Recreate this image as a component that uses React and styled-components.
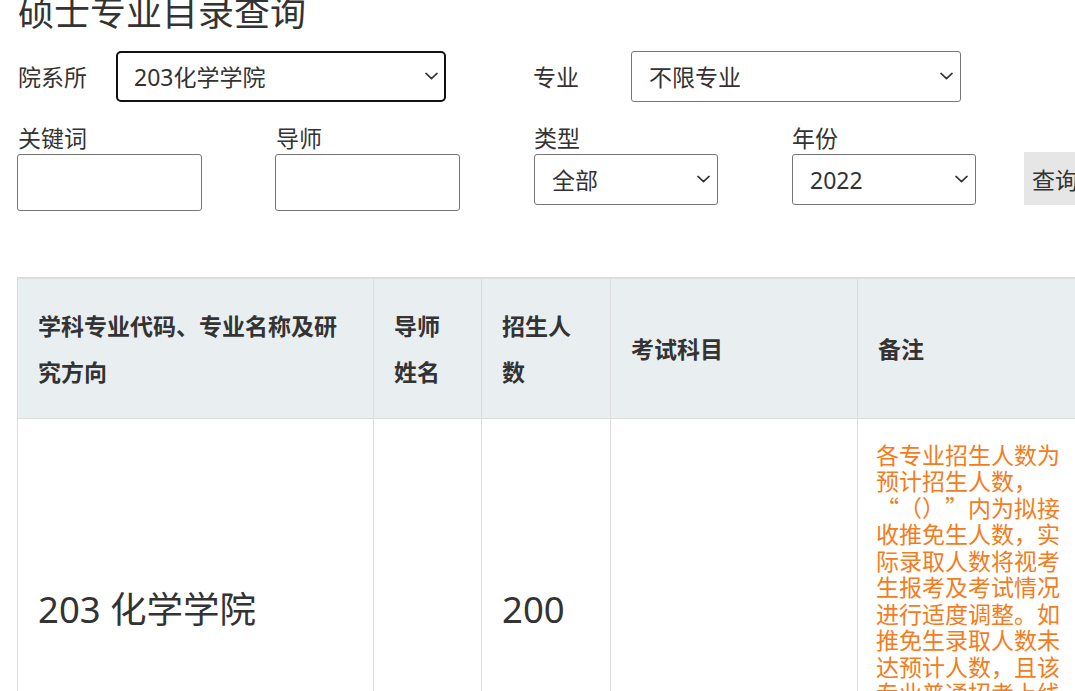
import React from 'react';
import styled, { createGlobalStyle } from 'styled-components';

const GlobalStyle = createGlobalStyle`
  html, body {
    margin: 0;
    padding: 0;
    overflow: hidden;
    background: #fff;
  }
  body {
    font-family: "Noto Sans", "Noto Sans CJK SC", sans-serif;
    color: #333;
  }
`;

// zero-width space lets the line break between "，" and the opening quote
const remark =
  '各专业招生人数为预计招生人数，\u200B“（）”内为拟接收推免生人数，实际录取人数将视考生报考及考试情况进行适度调整。如推免生录取人数未达预计人数，且该专业普通招考上线生源充足，剩余名额将用于普通招考。';

const Chevron = () => (
  <svg width="13" height="8" viewBox="0 0 13 8" fill="none">
    <path d="M1 1.2l5.5 5.3 5.5-5.3" stroke="#333" strokeWidth="1.6" strokeLinecap="round" strokeLinejoin="round" />
  </svg>
);

const SelectBox = ({ value, width, focused }) => (
  <SelectWrap $width={width}>
    <Select $focused={focused} defaultValue={value}>
      <option>{value}</option>
    </Select>
    <Arrow>
      <Chevron />
    </Arrow>
  </SelectWrap>
);

const App = () => {
  return (
    <Page>
      <GlobalStyle />
      <Title>硕士专业目录查询</Title>
      <TopRow>
        <Field>
          <InlineLabel>院系所</InlineLabel>
          <SelectBox value="203化学学院" width={330} focused />
        </Field>
        <Field>
          <InlineLabel>专业</InlineLabel>
          <SelectBox value="不限专业" width={330} />
        </Field>
      </TopRow>
      <FilterRow>
        <Stack>
          <StackLabel>关键词</StackLabel>
          <TextInput />
        </Stack>
        <Stack>
          <StackLabel>导师</StackLabel>
          <TextInput />
        </Stack>
        <Stack>
          <StackLabel>类型</StackLabel>
          <SelectBox value="全部" width={184} />
        </Stack>
        <Stack>
          <StackLabel>年份</StackLabel>
          <SelectBox value="2022" width={184} />
        </Stack>
        <QueryButton>查询</QueryButton>
      </FilterRow>
      <Table>
        <colgroup>
          <col style={{ width: 356 }} />
          <col style={{ width: 108 }} />
          <col style={{ width: 129 }} />
          <col style={{ width: 247 }} />
          <col style={{ width: 236 }} />
        </colgroup>
        <thead>
          <tr>
            <Th>学科专业代码、专业名称及研究方向</Th>
            <Th>导师姓名</Th>
            <Th>招生人数</Th>
            <Th>考试科目</Th>
            <Th>备注</Th>
          </tr>
        </thead>
        <tbody>
          <tr>
            <Td $big>203 化学学院</Td>
            <Td />
            <Td $big>200</Td>
            <Td />
            <RemarkCell>{remark}</RemarkCell>
          </tr>
        </tbody>
      </Table>
    </Page>
  );
};

export default App;

const Page = styled.div`
  padding: 0 0 0 17px;
  width: 1200px;
`;

const Title = styled.h1`
  margin: -9px 0 16px 1px;
  font-size: 36px;
  line-height: 44px;
  font-weight: 400;
  color: #333;
`;

const TopRow = styled.div`
  display: flex;
  gap: 86px;
  align-items: center;
`;

const Field = styled.div`
  display: flex;
  align-items: center;
`;

const InlineLabel = styled.span`
  width: 98px;
  padding-left: 1px;
  font-size: 23px;
  line-height: 30px;
`;

const SelectWrap = styled.div`
  position: relative;
  width: ${(p) => p.$width}px;
  height: 51px;
`;

const Select = styled.select`
  appearance: none;
  -webkit-appearance: none;
  box-sizing: border-box;
  width: 100%;
  height: 100%;
  margin: 0;
  padding: 0 40px 0 ${(p) => (p.$focused ? 16 : 17)}px;
  font-family: "Noto Sans", "Noto Sans CJK SC", sans-serif;
  font-size: 23px;
  color: #333;
  background: #fff;
  border: ${(p) => (p.$focused ? '2px solid #111' : '1px solid #767676')};
  border-radius: ${(p) => (p.$focused ? 5 : 3)}px;
  outline: none;
`;

const Arrow = styled.span`
  position: absolute;
  right: 8px;
  top: 50%;
  transform: translateY(-60%);
  display: flex;
  pointer-events: none;
`;

const FilterRow = styled.div`
  display: grid;
  grid-template-columns: 258px 258px 258px 233px auto;
  align-items: start;
  margin-top: 20px;
`;

const Stack = styled.div`
  display: flex;
  flex-direction: column;
  & > div {
    margin-left: 1px;
  }
`;

const StackLabel = styled.label`
  padding-left: 1px;
  font-size: 23px;
  line-height: 32px;
`;

const TextInput = styled.input`
  box-sizing: border-box;
  width: 185px;
  height: 57px;
  margin: 0;
  border: 1px solid #767676;
  border-radius: 3px;
  background: #fff;
  font-size: 22px;
`;

const QueryButton = styled.button`
  box-sizing: border-box;
  margin-top: 30px;
  height: 53px;
  width: 80px;
  padding: 0 0 0 8px;
  text-align: left;
  border: none;
  background: #e6e6e6;
  font-family: "Noto Sans", "Noto Sans CJK SC", sans-serif;
  font-size: 23px;
  color: #333;
`;

const Table = styled.table`
  margin-top: 66px;
  width: 1076px;
  table-layout: fixed;
  border-collapse: collapse;
  border-top: 2px solid #dddddd;
`;

const Th = styled.th`
  height: 140px;
  box-sizing: border-box;
  padding: 22px 20px;
  background: #e9eef1;
  border: 1px solid #dcdcdc;
  text-align: left;
  vertical-align: middle;
  font-family: "Noto Sans CJK SC", sans-serif;
  font-size: 23px;
  line-height: 46px;
  font-weight: 700;
  color: #333;
`;

const Td = styled.td`
  padding: 0 20px;
  border: 1px solid #dcdcdc;
  vertical-align: middle;
  font-size: ${(p) => (p.$big ? 36.5 : 23)}px;
  line-height: 1.3;
  color: #333;
`;

const RemarkCell = styled.td`
  padding: 22px 18px 16px;
  border: 1px solid #dcdcdc;
  vertical-align: top;
  font-family: "Noto Sans CJK SC", sans-serif;
  text-spacing-trim: space-all;
  font-size: 23px;
  line-height: 26.5px;
  color: #f47c20;
`;
